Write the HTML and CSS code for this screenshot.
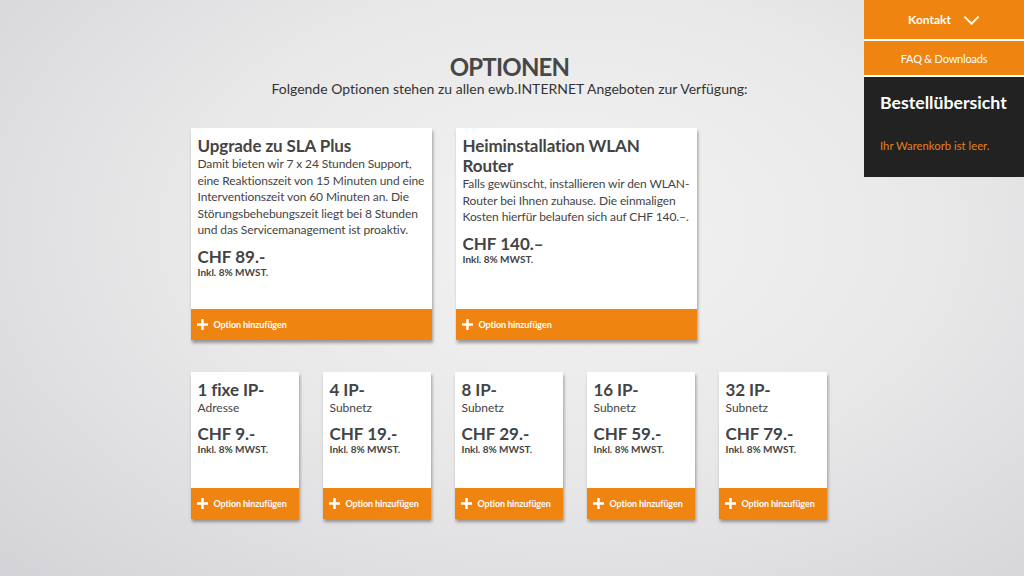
FILE: index.html
```html
<!DOCTYPE html>
<html lang="de">
<head>
<meta charset="utf-8">
<title>Optionen</title>
<link rel="stylesheet" href="styles.css">
</head>
<body>
<main class="main">
  <header class="head">
    <h1 class="title">OPTIONEN</h1>
    <p class="subtitle">Folgende Optionen stehen zu allen ewb.INTERNET Angeboten zur Verfügung:</p>
  </header>

  <div class="row row-big">
    <div class="card card-big">
      <div class="body">
        <h2 class="name">Upgrade zu SLA Plus</h2>
        <p class="desc">Damit bieten wir 7 x 24 Stunden Support, eine Reaktionszeit von 15 Minuten und eine Interventionszeit von 60 Minuten an. Die Störungsbehebungszeit liegt bei 8 Stunden und das Servicemanagement ist proaktiv.</p>
        <div class="price">CHF 89.-</div>
        <div class="vat">Inkl. 8% MWST.</div>
      </div>
      <a class="add"><svg class="plus" viewBox="0 0 10 10"><path d="M5 0v10M0 5h10"/></svg>Option hinzufügen</a>
    </div>
    <div class="card card-big">
      <div class="body">
        <h2 class="name">Heiminstallation WLAN Router</h2>
        <p class="desc">Falls gewünscht, installieren wir den WLAN-Router bei Ihnen zuhause. Die einmaligen Kosten hierfür belaufen sich auf CHF 140.–.</p>
        <div class="price">CHF 140.–</div>
        <div class="vat">Inkl. 8% MWST.</div>
      </div>
      <a class="add"><svg class="plus" viewBox="0 0 10 10"><path d="M5 0v10M0 5h10"/></svg>Option hinzufügen</a>
    </div>
  </div>

  <div class="row row-small">
    <div class="card card-small">
      <div class="body">
        <h2 class="name">1 fixe IP-</h2>
        <p class="sub">Adresse</p>
        <div class="price">CHF 9.-</div>
        <div class="vat">Inkl. 8% MWST.</div>
      </div>
      <a class="add"><svg class="plus" viewBox="0 0 10 10"><path d="M5 0v10M0 5h10"/></svg>Option hinzufügen</a>
    </div>
    <div class="card card-small">
      <div class="body">
        <h2 class="name">4 IP-</h2>
        <p class="sub">Subnetz</p>
        <div class="price">CHF 19.-</div>
        <div class="vat">Inkl. 8% MWST.</div>
      </div>
      <a class="add"><svg class="plus" viewBox="0 0 10 10"><path d="M5 0v10M0 5h10"/></svg>Option hinzufügen</a>
    </div>
    <div class="card card-small">
      <div class="body">
        <h2 class="name">8 IP-</h2>
        <p class="sub">Subnetz</p>
        <div class="price">CHF 29.-</div>
        <div class="vat">Inkl. 8% MWST.</div>
      </div>
      <a class="add"><svg class="plus" viewBox="0 0 10 10"><path d="M5 0v10M0 5h10"/></svg>Option hinzufügen</a>
    </div>
    <div class="card card-small">
      <div class="body">
        <h2 class="name">16 IP-</h2>
        <p class="sub">Subnetz</p>
        <div class="price">CHF 59.-</div>
        <div class="vat">Inkl. 8% MWST.</div>
      </div>
      <a class="add"><svg class="plus" viewBox="0 0 10 10"><path d="M5 0v10M0 5h10"/></svg>Option hinzufügen</a>
    </div>
    <div class="card card-small">
      <div class="body">
        <h2 class="name">32 IP-</h2>
        <p class="sub">Subnetz</p>
        <div class="price">CHF 79.-</div>
        <div class="vat">Inkl. 8% MWST.</div>
      </div>
      <a class="add"><svg class="plus" viewBox="0 0 10 10"><path d="M5 0v10M0 5h10"/></svg>Option hinzufügen</a>
    </div>
  </div>
</main>

<aside class="side">
  <a class="side-btn side-contact">Kontakt <svg class="chev" viewBox="0 0 18 10"><path d="M1.5 1.5l7.5 7.5 7.5-7.5"/></svg></a>
  <a class="side-btn side-faq">FAQ &amp; Downloads</a>
  <div class="cart">
    <h3 class="cart-title">Bestellübersicht</h3>
    <p class="cart-empty">Ihr Warenkorb ist leer.</p>
  </div>
</aside>
</body>
</html>
```
FILE: styles.css
```css
html, body {
  margin: 0;
  padding: 0;
  height: 100%;
}
body {
  font-family: Lato, "Open Sans", sans-serif;
  font-variant-ligatures: none;
  color: #444;
  background: radial-gradient(ellipse 75% 85% at 55% 40%, #f3f3f3 0%, #e8e8e9 50%, #d4d4d8 100%);
  overflow: hidden;
}
.main {
  width: 638px;
  margin: 0 auto;
  padding: 0 5px 0 0;
}
.head {
  text-align: center;
  padding-top: 54px;
}
.title {
  margin: 0;
  font-size: 24px;
  line-height: 26px;
  font-weight: bold;
  letter-spacing: -0.8px;
  color: #474747;
}
.subtitle {
  margin: 0;
  font-size: 14px;
  line-height: 18px;
  color: #333;
}
.row {
  display: flex;
  gap: 24px;
}
.row-big {
  margin-top: 30px;
}
.row-small {
  margin-top: 32px;
}
.card {
  background: #fff;
  display: flex;
  flex-direction: column;
  justify-content: space-between;
  box-shadow: 1px 3px 3px rgba(0,0,0,0.35);
}
.card-big {
  width: 241px;
  height: 212px;
}
.card-small {
  width: 108px;
  height: 147px;
}
.body {
  padding: 8px 5px 0 7px;
}
.name {
  margin: 0;
  font-size: 17px;
  line-height: 20px;
  font-weight: bold;
  letter-spacing: -0.1px;
  color: #444;
}
.desc {
  margin: 0;
  font-size: 12px;
  line-height: 16.5px;
  letter-spacing: -0.1px;
  color: #444;
}
.sub {
  margin: 0;
  font-size: 12px;
  line-height: 16px;
  color: #444;
}
.price {
  margin-top: 8px;
  font-size: 17px;
  line-height: 19px;
  font-weight: bold;
  color: #444;
}
.vat {
  font-size: 10px;
  line-height: 12px;
  font-weight: bold;
  color: #444;
}
.add {
  display: flex;
  align-items: center;
  height: 31px;
  background: #ef8410;
  color: #fff;
  font-size: 9px;
  letter-spacing: -0.1px;
  font-weight: bold;
  padding-left: 6px;
}
.plus {
  width: 11px;
  height: 11px;
  margin-right: 6px;
  stroke: #fff;
  stroke-width: 2.2;
  fill: none;
}
.side {
  position: absolute;
  top: 0;
  right: 0;
  width: 160px;
}
.side-btn {
  display: flex;
  align-items: center;
  justify-content: center;
  background: #ef8410;
  color: #fff;
  font-size: 11px;
  letter-spacing: -0.2px;
  border-bottom: 2px solid #fff;
}
.side-contact {
  height: 39px;
  font-weight: bold;
  font-size: 12px;
  letter-spacing: 0;
}
.chev {
  width: 17px;
  height: 10px;
  margin-left: 12px;
  stroke: #fff;
  stroke-width: 2;
  fill: none;
}
.side-faq {
  height: 34px;
}
.cart {
  background: #222;
  height: 100px;
  padding: 14.5px 10px 0 16px;
  box-sizing: border-box;
}
.cart-title {
  margin: 0;
  font-size: 17.7px;
  line-height: 22px;
  color: #fff;
  font-weight: bold;
}
.cart-empty {
  margin: 24px 0 0 0;
  font-size: 11.3px;
  line-height: 16px;
  color: #e6801a;
}
```
